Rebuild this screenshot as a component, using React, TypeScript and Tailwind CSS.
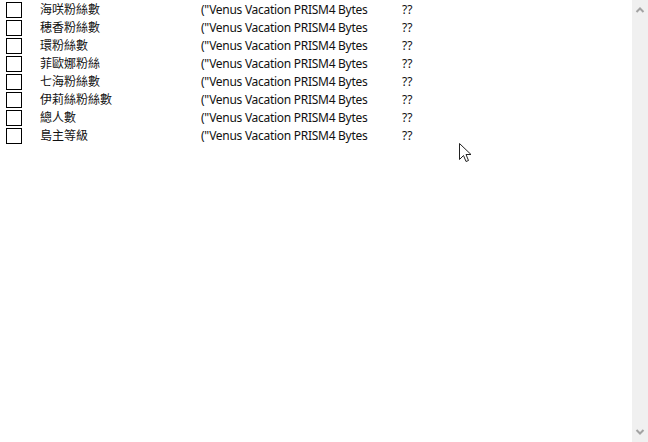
const rows = ["海咲粉絲數", "穂香粉絲數", "環粉絲數", "菲歐娜粉絲", "七海粉絲數", "伊莉絲粉絲數", "總人數", "島主等級"];

function Cursor() {
  return (
    <svg width="13" height="20" viewBox="0 0 13 20" className="absolute left-[459px] top-[143px]" aria-hidden="true">
      <path d="M0.5 0.5 L0.5 16.5 L4.5 12.5 L7 18.5 L9.5 17.5 L7 11.5 L12 11.5 Z" fill="white" stroke="#222" strokeWidth="1" strokeLinejoin="miter" />
    </svg>
  );
}

export default function App() {
  return (
    <div className="relative flex h-[442px] w-[648px] overflow-hidden bg-white text-[12px] text-[#111]" style={{ fontFamily: '"Noto Sans", "Noto Sans CJK TC", sans-serif' }}>
      <div className="flex-1 pt-[1px]">
        {rows.map((label) => (
          <div key={label} className="flex h-[18px] items-center">
            <span className="ml-[6px] size-[16px] shrink-0 border border-black bg-white" />
            <span className="ml-[18px] w-[161px] shrink-0 leading-none">{label}</span>
            <span className="w-[201px] shrink-0 leading-none tracking-[-0.28px]">("Venus Vacation PRISM4 Bytes</span>
            <span className="leading-none">??</span>
          </div>
        ))}
      </div>
      <div className="flex w-[16px] flex-col justify-between bg-[#f0f0f0] py-[6px]">
        <svg width="16" height="7" viewBox="0 0 16 7" aria-hidden="true">
          <path d="M4.5 6 L8 2.5 L11.5 6" fill="none" stroke="#a3a3a3" strokeWidth="2" />
        </svg>
        <svg width="16" height="7" viewBox="0 0 16 7" aria-hidden="true">
          <path d="M4.5 1 L8 4.5 L11.5 1" fill="none" stroke="#a3a3a3" strokeWidth="2" />
        </svg>
      </div>
      <Cursor />
    </div>
  );
}
